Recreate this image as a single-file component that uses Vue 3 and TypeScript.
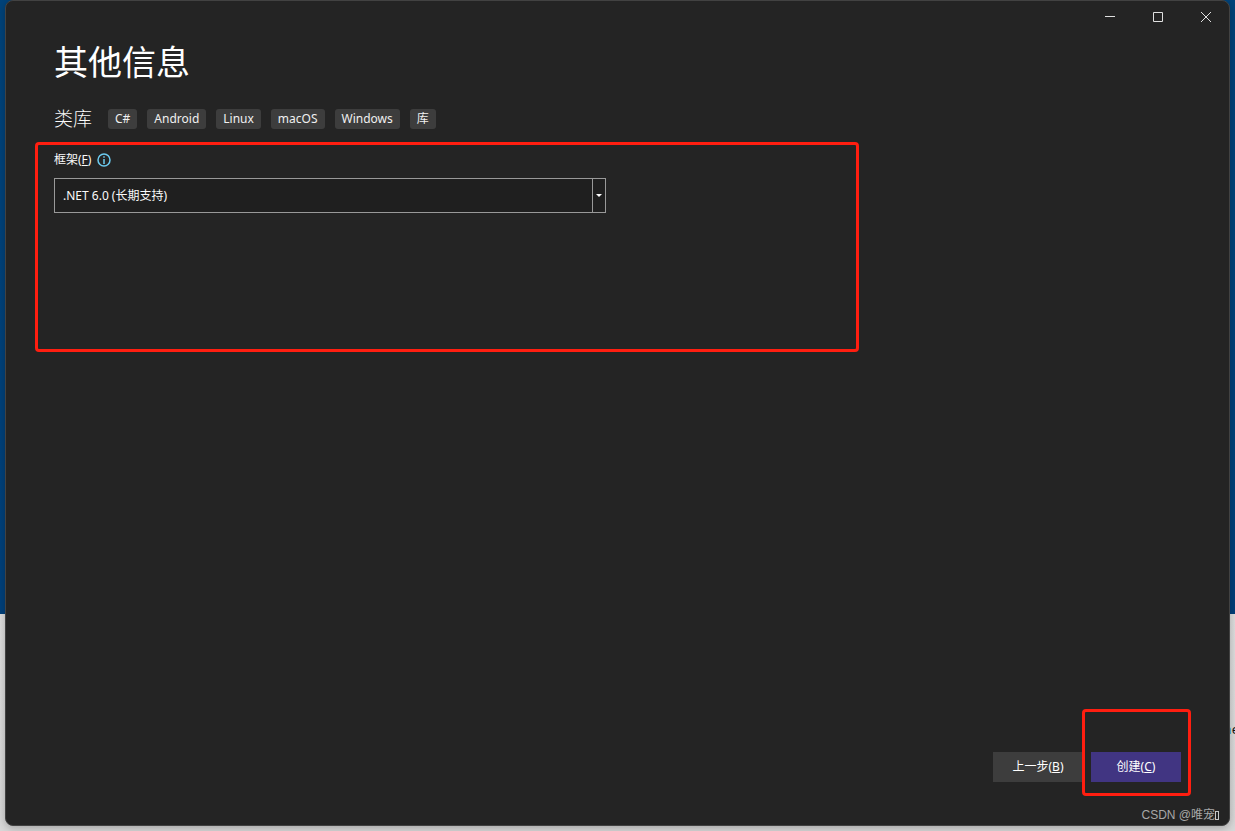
<script setup lang="ts">
import { ref } from 'vue'

const tags: string[] = ['C#', 'Android', 'Linux', 'macOS', 'Windows', '库']
const frameworks: string[] = ['.NET 6.0 (长期支持)']
const framework = ref<string>(frameworks[0])
</script>

<template>
  <div class="desktop">
    <span class="behind"><i>n</i>e</span>
    <main class="window">
      <header class="titlebar">
        <button class="caption" type="button" aria-label="最小化">
          <svg width="12" height="12" viewBox="0 0 12 12"><path d="M1 5.500h10" /></svg>
        </button>
        <button class="caption" type="button" aria-label="最大化">
          <svg width="12" height="12" viewBox="0 0 12 12"><path d="M1.500 1.500h9v9h-9z" /></svg>
        </button>
        <button class="caption" type="button" aria-label="关闭">
          <svg width="12" height="12" viewBox="0 0 12 12"><path d="M1 1l10 10M11 1L1 11" /></svg>
        </button>
      </header>

      <h1 class="title">其他信息</h1>

      <div class="template">
        <h2 class="name">类库</h2>
        <ul class="tags">
          <li v-for="tag in tags" :key="tag" class="tag">{{ tag }}</li>
        </ul>
      </div>

      <section class="options">
        <div class="label-row">
          <label for="framework">框架(<u>F</u>)</label>
          <svg class="info" width="14" height="14" viewBox="0 0 14 14">
            <circle cx="7" cy="7" r="6" fill="none" stroke="#6ccbf0" stroke-width="1.500" />
            <path d="M6.250 3.250h1.500v1.500h-1.500zM6.250 6h1.500v5h-1.500z" fill="#6ccbf0" />
          </svg>
        </div>
        <div class="combo">
          <select id="framework" v-model="framework">
            <option v-for="item in frameworks" :key="item" :value="item">{{ item }}</option>
          </select>
          <span class="drop">
            <svg width="6" height="3" viewBox="0 0 6 3"><path d="M0 0h6L3 3z" fill="#fff" /></svg>
          </span>
        </div>
      </section>

      <footer class="actions">
        <button class="action" type="button">上一步(<u>B</u>)</button>
        <div class="marked">
          <button class="action primary" type="button">创建(<u>C</u>)</button>
        </div>
      </footer>
      <p class="credit">CSDN @唯宠<span class="missing"></span></p>
    </main>
  </div>
</template>

<style>
body {
  margin: 0;
}
</style>

<style scoped>
* {
  box-sizing: border-box;
}

.desktop {
  position: relative;
  display: flex;
  min-height: 100vh;
  padding: 0 5px 5px;
  overflow: hidden;
  background: linear-gradient(#00437a 0, #00407a 614px, #dedede 614px, #d8d8d8 100%);
  font-family: "Noto Sans", "Noto Sans CJK SC", sans-serif;
  font-size: 12px;
  line-height: 20px;
  color: #fafafa;
}

.behind {
  position: absolute;
  top: 719px;
  right: -4px;
  font-size: 13px;
  color: #111;
}

.behind i {
  font-style: normal;
  color: #2b91d0;
}

.window {
  position: relative;
  display: flex;
  flex: 1;
  flex-direction: column;
  border: 1px solid #424242;
  border-radius: 8px;
  background: #242424;
  box-shadow: 0 2px 8px rgba(0, 0, 0, 0.25);
}

.titlebar {
  display: flex;
  justify-content: flex-end;
  height: 32px;
  margin-right: -1px;
}

.caption {
  display: flex;
  align-items: center;
  justify-content: center;
  width: 48px;
  padding: 0;
  border: 0;
  background: none;
}

.caption svg {
  fill: none;
  stroke: #e0e0e0;
  stroke-width: 1;
}

.title {
  margin: 4px 0 0 48px;
  font-size: 34px;
  font-weight: 400;
  line-height: 50px;
  color: #fff;
}

.template {
  display: flex;
  align-items: center;
  gap: 16px;
  margin: 18px 0 0 48px;
  height: 28px;
}

.name {
  margin: 0;
  font-size: 19px;
  font-weight: 300;
  line-height: 28px;
}

.tags {
  display: flex;
  gap: 10px;
  margin: 0;
  padding: 0;
  list-style: none;
}

.tag {
  padding: 0 7px;
  border-radius: 3px;
  background: #3d3d3d;
  color: #f0f0f0;
}

.options {
  width: calc(100% - 399px);
  min-height: 210px;
  margin: 9px 0 0 29px;
  padding: 5px 16px;
  border: 3px solid #ff1e10;
  border-radius: 4px;
}

.label-row {
  display: flex;
  align-items: center;
  gap: 6px;
}

.combo {
  position: relative;
  max-width: 552px;
  height: 35px;
  margin-top: 8px;
}

.combo select {
  width: 100%;
  height: 100%;
  padding: 0 22px 0 8px;
  border: 1px solid #999;
  border-radius: 0;
  appearance: none;
  background: #1f1f1f;
  color: #fafafa;
  font: inherit;
}

.drop {
  position: absolute;
  inset: 0 0 0 auto;
  display: flex;
  align-items: center;
  justify-content: center;
  width: 14px;
  padding-right: 1px;
  border-left: 1px solid #999;
  pointer-events: none;
}

.actions {
  display: flex;
  justify-content: flex-end;
  gap: 8px;
  margin-top: auto;
  padding-right: 48px;
}

.action {
  width: 90px;
  height: 30px;
  padding: 0;
  border: 0;
  background: #3d3d3d;
  color: #fff;
  font: inherit;
}

.primary {
  background: #413582;
}

.marked {
  position: relative;
}

.marked::after {
  content: "";
  position: absolute;
  inset: -43px -10px -14px -9px;
  border: 3px solid #ff1e10;
  border-radius: 4px;
  pointer-events: none;
}

.credit {
  display: flex;
  align-items: center;
  justify-content: flex-end;
  margin: 23px 10px 0 0;
  font-family: "Liberation Sans", "Noto Sans CJK SC", sans-serif;
  color: #a8a8a8;
}

.missing {
  width: 4px;
  height: 9px;
  border: 1px solid #c8c8c8;
}
</style>
